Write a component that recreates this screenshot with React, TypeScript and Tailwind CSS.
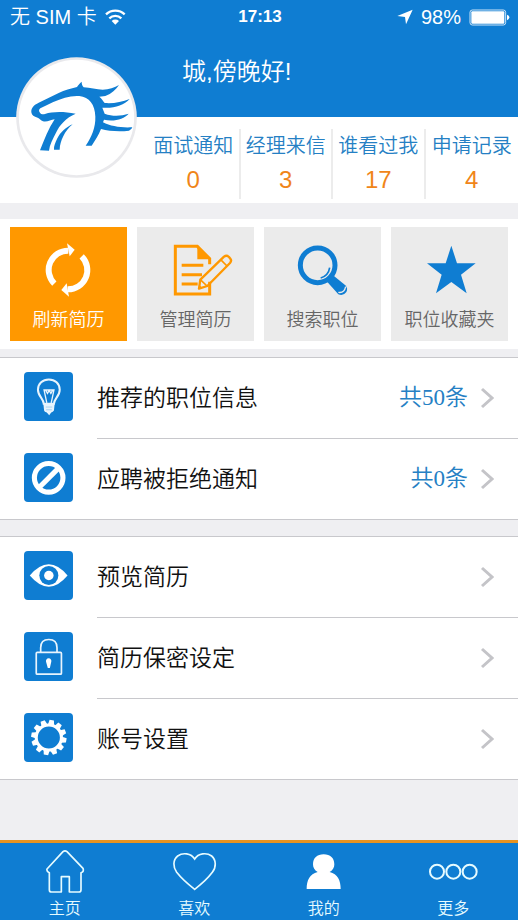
import type { ReactNode } from "react";

type TStat = { label: string; count: number };
type TTile = { label: string; icon: ReactNode; active?: boolean };
type TMenuItem = { label: string; icon: ReactNode; extra?: string };

const WifiIcon = () => (
  <svg viewBox="315 24 63 48" className="h-4 w-[21px]" aria-hidden="true">
    <g fill="none" stroke="#fff" strokeWidth="7">
      <path d="M318 40a41 41 0 0 1 56 0" />
      <path d="M328 52a26 26 0 0 1 36 0" />
    </g>
    <path d="M335 60a16 16 0 0 1 22 0l-11 11z" fill="#fff" />
  </svg>
);

const LocationIcon = () => (
  <svg viewBox="418 26 48 48" className="size-4" aria-hidden="true">
    <path d="M465 28 445 72l-3-22-23-3z" fill="#fff" />
  </svg>
);

const BatteryIcon = () => (
  <svg viewBox="632 25 123 51" className="h-[17px] w-[41px]" aria-hidden="true">
    <rect x="635" y="28" width="107" height="45" rx="7" fill="none" stroke="#cfe6f8" strokeWidth="3" />
    <rect x="639" y="32" width="99" height="37" rx="3" fill="#fff" />
    <path d="M746 42q7 2 7 8t-7 9z" fill="#fff" />
  </svg>
);

const HorseLogo = () => (
  <svg viewBox="20 20 363 363" className="size-full" role="img" aria-label="头像">
    <circle cx="201.500" cy="201.500" r="181" fill="#e9e9ec" />
    <circle cx="201.500" cy="201.500" r="173" fill="#fff" />
    <g fill="#0f7dd2">
      <path d="M66 186C65 172 74 164 88 157L148 128C166 119 184 115 203 110C206 105 211 99 217 94C217 101 219 107 223 111C242 113 262 117 280 118C299 118 316 112 329 104C320 118 307 130 288 137L270 139C277 145 282 153 286 158C310 160 337 156 361 146C344 164 314 175 279 172L286 190C311 199 336 197 358 190C344 206 314 215 284 208L281 216C304 228 336 233 369 231C367 236 363 239 359 241C329 245 298 242 275 236C268 255 257 270 247 286L229 286C247 260 259 231 258 199C257 163 240 140 210 137C183 135 158 144 132 155L93 174C88 178 88 183 92 187C95 192 101 193 107 191C129 184 161 183 199 190C170 202 151 224 140 247C130 267 121 283 119 301L92 300C105 268 117 235 136 207C124 208 114 216 101 213C94 210 91 205 85 202C74 199 67 195 66 186Z" />
      <path d="M190 222C171 230 153 245 143 266C138 277 133 288 134 298L151 298C152 273 166 241 190 222Z" />
    </g>
  </svg>
);

const RefreshIcon = () => (
  <svg viewBox="94 82 222 162" className="h-[54px] w-[74px]" aria-hidden="true">
    <g fill="none" stroke="#fff" strokeWidth="18">
      <path d="M161 204A58 58 0 0 1 203 105" />
      <path d="M243 122A58 58 0 0 1 201 221" />
    </g>
    <path d="M199 83 222 102 207 122z" fill="#fff" />
    <path d="M205 243 182 223 198 203z" fill="#fff" />
  </svg>
);

const EditIcon = () => (
  <svg viewBox="477 82 222 162" className="h-[54px] w-[74px]" aria-hidden="true">
    <g fill="none" stroke="#ff9800" strokeWidth="9">
      <path d="M629 146V129L592 92H526V235H629V198" />
      <path d="M545 149H610M545 177H606M545 205H593" />
      <path d="M601 192 672 123Q680 117 687 124L691 129Q696 135 690 142L622 211 597 219Z" strokeWidth="7" strokeLinejoin="round" />
      <path d="M662 132 681 151M601 192 621 211" strokeWidth="5" />
    </g>
    <path d="M592 92V131H631z" fill="#ff9800" />
    <path d="M599 209 607 216 596 220z" fill="#ff9800" />
  </svg>
);

const SearchIcon = () => (
  <svg viewBox="83 82 222 162" className="h-[54px] w-[74px]" aria-hidden="true">
    <path d="M207 199 226 180 261 209Q270 219 264 229Q255 242 240 236Z" fill="#0f7dd2" />
    <circle cx="178" cy="149" r="52" fill="none" stroke="#0f7dd2" strokeWidth="15" />
    <path d="M214 156A38 38 0 0 1 187 187" fill="none" stroke="#0f7dd2" strokeWidth="5" />
    <path d="M240 230Q258 233 262 213" fill="none" stroke="#ebebeb" strokeWidth="4" />
  </svg>
);

const StarIcon = () => (
  <svg viewBox="464 82 222 162" className="h-[54px] w-[74px]" aria-hidden="true">
    <path d="M579 90 596 143H652L608 177 625 233 579 199 533 233 550 177 506 143H562Z" fill="#0f7dd2" />
  </svg>
);

const BulbIcon = () => (
  <svg viewBox="73 50 144 144" className="size-full" aria-hidden="true">
    <path
      d="M131 143C130 128 114 121 114 102C114 84 128 72 146 72C164 72 178 84 178 102C178 121 162 128 161 143Z"
      fill="none"
      stroke="#e8f4fd"
      strokeWidth="6"
    />
    <path d="M140 141 132 103H161L153 141M137 104 142 113 147 104 152 113 157 104" fill="none" stroke="#e8f4fd" strokeWidth="4" />
    <path d="M130 144H163L161 163Q158 168 153 169L147 177 140 169Q133 168 132 163Z" fill="#e8f4fd" />
    <path d="M137 153H156M138 161H155" stroke="#8fc4ec" strokeWidth="2" />
  </svg>
);

const ForbiddenIcon = () => (
  <svg viewBox="73 293 144 144" className="size-full" aria-hidden="true">
    <circle cx="145.500" cy="366" r="42" fill="none" stroke="#fff" strokeWidth="15" />
    <path d="M116 396 176 336" stroke="#fff" strokeWidth="15" />
  </svg>
);

const EyeIcon = () => (
  <svg viewBox="73 60 144 144" className="size-full" aria-hidden="true">
    <path d="M90 132Q146 66 201 132Q146 198 90 132Z" fill="#fff" />
    <circle cx="146" cy="132" r="28" fill="#0f7dd2" />
    <circle cx="146" cy="132" r="14" fill="#fff" />
  </svg>
);

const LockIcon = () => (
  <svg viewBox="73 303 144 144" className="size-full" aria-hidden="true">
    <g fill="none" stroke="#e8f4fd" strokeWidth="5">
      <rect x="109" y="363" width="74" height="64" rx="3" />
      <path d="M122 363V349C122 333 132 325 146 325S170 333 170 349V363" />
    </g>
    <path d="M138 391A8 8 0 1 1 153 391L149 409H143Z" fill="#fff" />
  </svg>
);

const teeth = [0, 30, 60, 90, 120, 150, 180, 210, 240, 270, 300, 330];

const GearIcon = () => (
  <svg viewBox="73 546 144 144" className="size-full" aria-hidden="true">
    <circle cx="146" cy="618" r="37" fill="none" stroke="#fff" strokeWidth="9" />
    {teeth.map((deg) => (
      <path key={deg} d="M137 580 139 566H152L155 580Z" fill="#fff" transform={`rotate(${deg + 10} 146 618)`} />
    ))}
  </svg>
);

const ChevronIcon = () => (
  <svg viewBox="0 0 14 22" className="h-[22px] w-[14px]" aria-hidden="true">
    <path d="M2 2 12 11 2 20" fill="none" stroke="#c4c4c8" strokeWidth="3" />
  </svg>
);

const HomeIcon = () => (
  <svg viewBox="132 57 126 135" className="h-[45px] w-[42px]" aria-hidden="true">
    <path
      d="M189 65Q195 60 201 65L249 115Q252 124 246 127L243 128V179Q243 186 236 186H208V140H184V186H155Q148 186 148 179V128Q139 124 141 117Z"
      fill="none"
      stroke="#e6fbff"
      strokeWidth="5"
      strokeLinejoin="round"
    />
  </svg>
);

const HeartIcon = () => (
  <svg viewBox="516 57 135 135" className="size-[45px]" aria-hidden="true">
    <path
      d="M584 87C573 69 548 67 533 78C518 90 519 112 530 127C545 146 567 165 584 178C601 165 623 146 637 127C649 112 649 90 635 78C620 67 595 69 584 87Z"
      fill="none"
      stroke="#e6fbff"
      strokeWidth="5"
    />
  </svg>
);

const PersonIcon = () => (
  <svg viewBox="132 57 135 135" className="size-[45px]" aria-hidden="true">
    <path d="M182 126C172 121 168 112 168 103C168 84 180 73 200 73S232 84 232 103C232 112 228 121 218 126C242 132 251 151 251 177H149C149 151 158 132 182 126Z" fill="#fff" />
  </svg>
);

const MoreIcon = () => (
  <svg viewBox="510 57 150 135" className="h-[45px] w-[50px]" aria-hidden="true">
    <g fill="none" stroke="#e6fbff" strokeWidth="6">
      <circle cx="537" cy="125" r="21" />
      <circle cx="586" cy="125" r="21" />
      <circle cx="635" cy="125" r="21" />
    </g>
  </svg>
);

const stats: TStat[] = [
  { label: "面试通知", count: 0 },
  { label: "经理来信", count: 3 },
  { label: "谁看过我", count: 17 },
  { label: "申请记录", count: 4 },
];

const tiles: TTile[] = [
  { label: "刷新简历", icon: <RefreshIcon />, active: true },
  { label: "管理简历", icon: <EditIcon /> },
  { label: "搜索职位", icon: <SearchIcon /> },
  { label: "职位收藏夹", icon: <StarIcon /> },
];

const noticeItems: TMenuItem[] = [
  { label: "推荐的职位信息", icon: <BulbIcon />, extra: "共50条" },
  { label: "应聘被拒绝通知", icon: <ForbiddenIcon />, extra: "共0条" },
];

const settingItems: TMenuItem[] = [
  { label: "预览简历", icon: <EyeIcon /> },
  { label: "简历保密设定", icon: <LockIcon /> },
  { label: "账号设置", icon: <GearIcon /> },
];

const tabs: TMenuItem[] = [
  { label: "主页", icon: <HomeIcon /> },
  { label: "喜欢", icon: <HeartIcon /> },
  { label: "我的", icon: <PersonIcon /> },
  { label: "更多", icon: <MoreIcon /> },
];

const MenuList = ({ items }: { items: TMenuItem[] }) => (
  <ul className="border-t border-[#c8c8cc] bg-white">
    {items.map((item) => (
      <li key={item.label} className="border-[#c8c8cc] last:border-b">
        <a href="#" className="group flex items-start pl-6">
          <span className="mt-[14px] size-[49px] shrink-0 overflow-hidden rounded-sm bg-[#0f7dd2]">
            {item.icon}
          </span>
          <span
            className={`ml-6 flex flex-1 items-center border-[#c8c8cc] pr-6 ${
              item === items[items.length - 1] ? "h-20" : "h-[81px] border-b"
            }`}
          >
            <span className="flex-1 text-[23px] text-[#111]">{item.label}</span>
            {item.extra && (
              <span className="mr-3 font-['Liberation_Serif','Noto_Sans_CJK_SC',serif] text-[23px] text-[#2580c4]">
                {item.extra}
              </span>
            )}
            <ChevronIcon />
          </span>
        </a>
      </li>
    ))}
  </ul>
);

const App = () => {
  return (
    <div
      lang="zh-CN"
      className="flex min-h-screen flex-col bg-[#efeff2] font-['Liberation_Sans','Noto_Sans_CJK_SC',sans-serif] font-[350]"
    >
      <header className="relative bg-[#0f7dd2] text-white">
        <div className="grid h-[34px] grid-cols-3 items-center pr-2 pl-[10px] text-[20px]">
          <div className="flex items-center gap-2 whitespace-nowrap">
            <span>无 SIM 卡</span>
            <WifiIcon />
          </div>
          <span className="text-center text-[17px] font-bold">17:13</span>
          <div className="flex items-center justify-end gap-2">
            <LocationIcon />
            <span>98%</span>
            <BatteryIcon />
          </div>
        </div>
        <h1 className="pt-5 pb-[27px] pl-[182px] text-2xl leading-9">城,傍晚好!</h1>
        <div className="absolute top-[57px] left-4 size-[121px]">
          <HorseLogo />
        </div>
      </header>

      <section className="grid grid-cols-4 bg-white pt-3 pb-1 pl-[148px]">
        {stats.map((stat) => (
          <a
            key={stat.label}
            href="#"
            className="flex h-[70px] flex-col items-center border-r-2 border-[#ececec] whitespace-nowrap last:border-r-0"
          >
            <span className="text-[20px] leading-[34px] text-[#2580c4]">{stat.label}</span>
            <span className="text-2xl leading-[34px] text-[#f08519]">{stat.count}</span>
          </a>
        ))}
      </section>

      <section className="mt-4 grid grid-cols-4 gap-[10px] bg-white px-[10px] py-2">
        {tiles.map((tile) => (
          <button
            key={tile.label}
            type="button"
            className={`flex h-[114px] flex-col items-center gap-2 pt-4 text-lg leading-[30px] whitespace-nowrap ${
              tile.active ? "bg-[#ff9800] text-white" : "bg-[#ebebeb] text-[#666]"
            }`}
          >
            {tile.icon}
            <span>{tile.label}</span>
          </button>
        ))}
      </section>

      <main className="flex flex-1 flex-col gap-4 pt-2">
        <MenuList items={noticeItems} />
        <MenuList items={settingItems} />
      </main>

      <nav className="grid grid-cols-4 border-t-[3px] border-[#e8931f] bg-[#0f7dd2] pt-1.5">
        {tabs.map((tab) => (
          <a key={tab.label} href="#" className="flex flex-col items-center gap-1 text-base leading-[22px] text-[#e6fbff]">
            {tab.icon}
            <span>{tab.label}</span>
          </a>
        ))}
      </nav>
    </div>
  );
};

export default App;
